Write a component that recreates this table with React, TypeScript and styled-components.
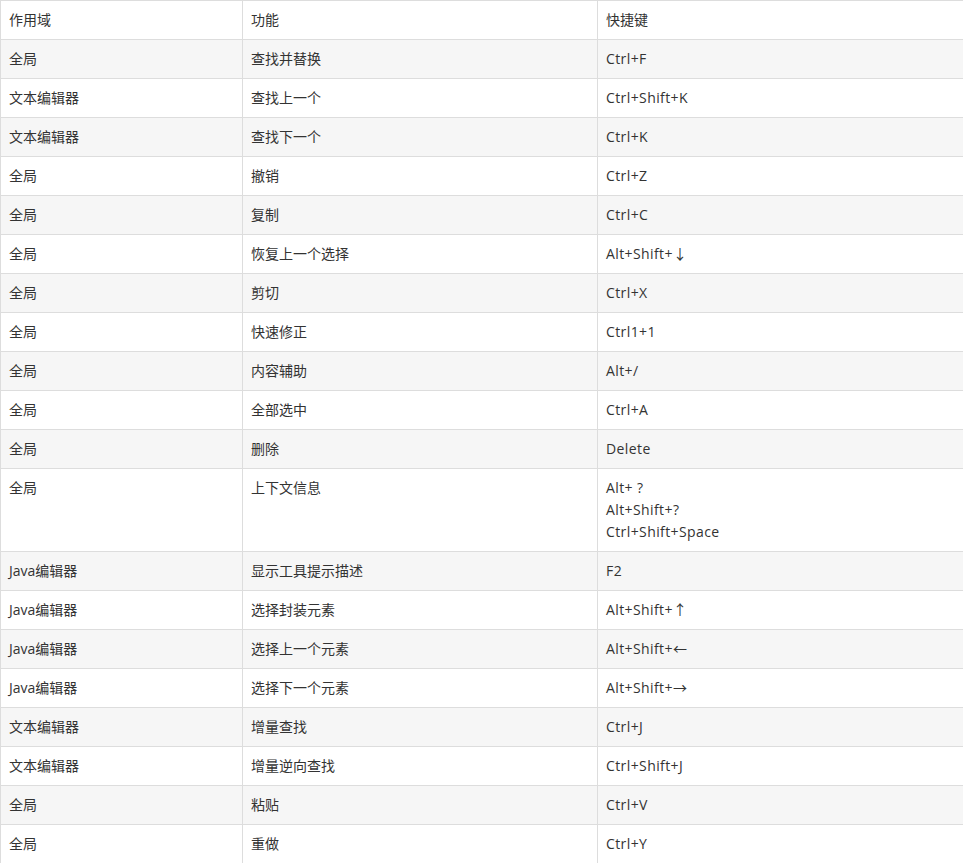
import React from "react";
import styled, { createGlobalStyle } from "styled-components";

const GlobalStyle = createGlobalStyle`
  body {
    margin: 0;
    background: #fff;
    font-family: "Open Sans", "Noto Sans CJK SC", sans-serif;
  }
`;

interface Shortcut {
  scope: string;
  action: string;
  keys: string[];
}

const rows: Shortcut[] = [
  { scope: "全局", action: "查找并替换", keys: ["Ctrl+F"] },
  { scope: "文本编辑器", action: "查找上一个", keys: ["Ctrl+Shift+K"] },
  { scope: "文本编辑器", action: "查找下一个", keys: ["Ctrl+K"] },
  { scope: "全局", action: "撤销", keys: ["Ctrl+Z"] },
  { scope: "全局", action: "复制", keys: ["Ctrl+C"] },
  { scope: "全局", action: "恢复上一个选择", keys: ["Alt+Shift+↓"] },
  { scope: "全局", action: "剪切", keys: ["Ctrl+X"] },
  { scope: "全局", action: "快速修正", keys: ["Ctrl1+1"] },
  { scope: "全局", action: "内容辅助", keys: ["Alt+/"] },
  { scope: "全局", action: "全部选中", keys: ["Ctrl+A"] },
  { scope: "全局", action: "删除", keys: ["Delete"] },
  {
    scope: "全局",
    action: "上下文信息",
    keys: ["Alt+ ?", "Alt+Shift+?", "Ctrl+Shift+Space"],
  },
  { scope: "Java编辑器", action: "显示工具提示描述", keys: ["F2"] },
  { scope: "Java编辑器", action: "选择封装元素", keys: ["Alt+Shift+↑"] },
  { scope: "Java编辑器", action: "选择上一个元素", keys: ["Alt+Shift+←"] },
  { scope: "Java编辑器", action: "选择下一个元素", keys: ["Alt+Shift+→"] },
  { scope: "文本编辑器", action: "增量查找", keys: ["Ctrl+J"] },
  { scope: "文本编辑器", action: "增量逆向查找", keys: ["Ctrl+Shift+J"] },
  { scope: "全局", action: "粘贴", keys: ["Ctrl+V"] },
  { scope: "全局", action: "重做", keys: ["Ctrl+Y"] },
];

export default function App() {
  return (
    <>
      <GlobalStyle />
      <Table>
        <colgroup>
          <col style={{ width: 242 }} />
          <col style={{ width: 355 }} />
          <col style={{ width: 366 }} />
        </colgroup>
        <thead>
          <tr>
            <Cell as="th">作用域</Cell>
            <Cell as="th">功能</Cell>
            <Cell as="th">快捷键</Cell>
          </tr>
        </thead>
        <tbody>
          {rows.map((r, i) => (
            <Row key={i} $striped={i % 2 === 0}>
              <Cell>{r.scope}</Cell>
              <Cell>{r.action}</Cell>
              <Cell>
                {r.keys.map((k, j) => (
                  <KeyLine key={j}>{k}</KeyLine>
                ))}
              </Cell>
            </Row>
          ))}
        </tbody>
      </Table>
    </>
  );
}

const Table = styled.table`
  width: 963px;
  border-collapse: collapse;
  table-layout: fixed;
  border: 1px solid #dddddd;
  font-size: 14px;
  color: #333333;
`;

const Row = styled.tr<{ $striped: boolean }>`
  background: ${(p) => (p.$striped ? "#f6f6f6" : "#ffffff")};
`;

const Cell = styled.td`
  border: 1px solid #dddddd;
  padding: 8px 8px;
  line-height: 22px;
  text-align: left;
  vertical-align: top;
  font-weight: 400;
`;

const KeyLine = styled.div`
  white-space: nowrap;
  letter-spacing: 0.4px;
`;
